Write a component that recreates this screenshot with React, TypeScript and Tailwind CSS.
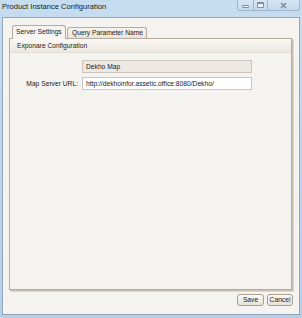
import React from "react";

export default function App() {
  const font = { fontFamily: '"Liberation Sans", Arial, sans-serif' };
  return (
    <div
      className="w-[302px] h-[318px] flex flex-col bg-gradient-to-b from-[#c6dcf0] to-[#b4d0e8] text-[#222]"
      style={font}
    >
      {/* title bar */}
      <div className="h-[17px] flex items-start shrink-0">
        <div className="pl-[2px] pt-[2px] text-[7.6px] leading-[9px] text-[#1b1b1b] flex-1">
          Product Instance Configuration
        </div>
        <div className="flex h-[11px] mr-[2px] rounded-b-[3px] border border-t-0 border-[#9fb6cc] overflow-hidden bg-gradient-to-b from-[#d6e6f4] to-[#c4d9ed]">
          <div className="w-[16px] flex items-end justify-center pb-[2px] border-r border-[#9fb6cc]">
            <div className="w-[7px] h-[3px] rounded-[1px] border border-[#7f8e9e] bg-white/70" />
          </div>
          <div className="w-[14px] flex items-center justify-center border-r border-[#9fb6cc]">
            <div className="w-[7px] h-[6px] rounded-[1px] border border-[#7f8e9e] border-t-2 bg-white/70" />
          </div>
          <div className="w-[31px] flex items-center justify-center">
            <svg width="7" height="7" viewBox="0 0 7 7">
              <path d="M1 1 L6 6 M6 1 L1 6" stroke="#7f8e9e" strokeWidth="1.5" />
            </svg>
          </div>
        </div>
      </div>

      {/* body */}
      <div className="flex-1 mx-[2px] mb-[3px] bg-[#f5f3ef] border border-[#94a7ba] flex flex-col px-[6px] pt-[6px] pb-[8px]">
        {/* tabs */}
        <div className="flex items-end pl-[3px] h-[14px] shrink-0 relative z-10">
          <div className="h-[14px] w-[54px] border border-b-0 border-[#b8ab9b] rounded-t-[3px] bg-[#f7f5f1] text-[6.7px] leading-[12px] pl-[3px] mb-[-1px] pb-[1px]">
            Server Settings
          </div>
          <div className="h-[11px] w-[80px] ml-[1px] border border-b-0 border-[#b8ab9b] rounded-t-[3px] bg-gradient-to-b from-[#f6f3ee] to-[#e9e4dc] text-[6.7px] leading-[10px] pl-[4px]">
            Query Parameter Name
          </div>
        </div>

        {/* panel */}
        <div className="flex-1 flex flex-col border border-[#b8ab9b] bg-[#f5f3ef] shadow-[1px_1px_0_#c9c0b6,2px_2px_0_#ddd6cd] mr-[1px]">
          <div className="h-[14px] shrink-0 bg-gradient-to-b from-[#faf8f5] to-[#ece7df] border-b border-[#e2dcd3] text-[6.7px] leading-[13px] pl-[7px]">
            Exponare Configuration
          </div>
          <div className="flex flex-col gap-[4px] pt-[7px]">
            <div className="flex items-center">
              <div className="w-[68px]" />
              <div className="ml-[4px] w-[170px] h-[13px] border border-[#cdc5bb] bg-[#ece9e4] text-[6.7px] leading-[11px] pl-[3px]">
                Dekho Map
              </div>
            </div>
            <div className="flex items-center">
              <div className="w-[68px] text-right text-[6.7px] leading-[11px]">Map Server URL:</div>
              <div className="ml-[4px] w-[170px] h-[13px] border border-[#cdc5bb] bg-white text-[6.7px] leading-[11px] pl-[3px]">
                http://dekhoinfor.assetic.office:8080/Dekho/
              </div>
            </div>
          </div>
        </div>

        {/* buttons */}
        <div className="flex justify-end gap-[3px] pt-[4px] shrink-0">
          <div className="w-[27px] h-[12px] rounded-[3px] border border-[#a99d8e] bg-gradient-to-b from-[#fbfaf8] to-[#e6e0d7] text-[6.7px] leading-[10px] text-center">
            Save
          </div>
          <div className="w-[26px] h-[12px] rounded-[3px] border border-[#a99d8e] bg-gradient-to-b from-[#fbfaf8] to-[#e6e0d7] text-[6.7px] leading-[10px] text-center">
            Cancel
          </div>
        </div>
      </div>
    </div>
  );
}
